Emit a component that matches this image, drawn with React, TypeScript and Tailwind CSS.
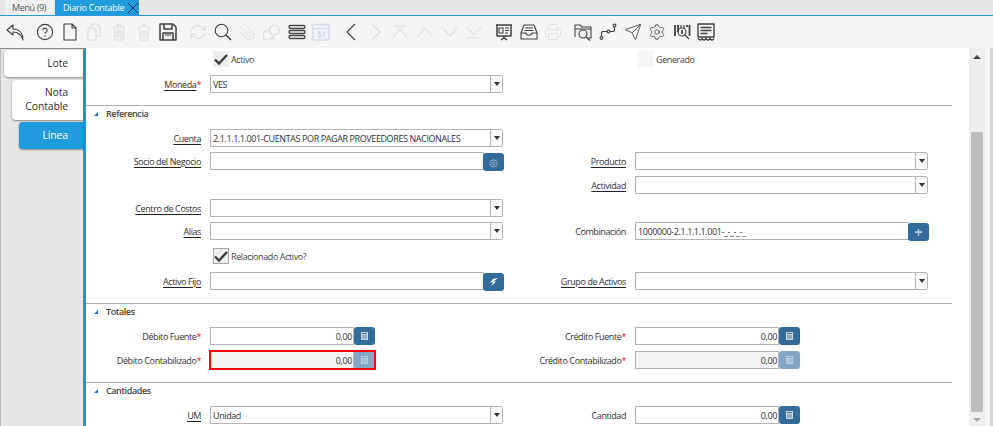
import React from 'react';
import { Paperclip, Send, Settings, Printer } from 'lucide-react';

const ACTIVE = '#404040';
const OFF = '#dcdcdc';

const Svg = ({ color = ACTIVE, children, w = 18 }: { color?: string; children: React.ReactNode; w?: number }) => (
  <svg width={w} height={18} viewBox={`0 0 ${w} 18`} fill="none" stroke={color} strokeWidth={1.1} strokeLinejoin="round">
    {children}
  </svg>
);

const TrashIcon = () => (
  <Svg color={OFF}>
    <path d="M3 4h12M7 4V2h4v2M4 4l1 13h8l1-13M7 6.5v8M9 6.5v8M11 6.5v8" />
  </Svg>
);

// Toolbar, grouped the way the window groups its actions
const toolGroups: React.ReactNode[][] = [
  [
    <Svg><path d="M7 2 1 7l6 5V9c4 0 8 2 10 8 0-7-4-11-10-11z" /></Svg>,
  ],
  [
    <Svg>
      <circle cx="9" cy="9" r="7.6" />
      <path d="M6.8 7.2a2.2 2.2 0 1 1 3.3 2c-.8.4-1.1.8-1.1 1.6M9 12.3v1.2" />
    </Svg>,
    <Svg><path d="M3 1h8l4 4v12H3zM11 1v4h4" /></Svg>,
    <Svg color={OFF}><path d="M6 4V1h6l3 3v9h-4M3 5h6l2 2v10H3z" /></Svg>,
    <TrashIcon />,
    <TrashIcon />,
    <Svg>
      <path strokeWidth={1.5} d="M1 1h13l3 3v13H1zM5 1v5h8V1M4 17v-7h10v7" />
      <path d="M6 12h6" />
    </Svg>,
  ],
  [
    <Svg color={OFF}><path d="M2 8a7 7 0 0 1 12-3l2 2m0-5v5h-5M16 10A7 7 0 0 1 4 13l-2-2m0 5v-5h5" /></Svg>,
    <Svg><circle cx="7.5" cy="7.5" r="6.3" /><path strokeWidth={1.5} d="m12 12 5 5" /></Svg>,
    <Paperclip size={18} strokeWidth={1.2} color={OFF} className="-scale-x-100" />,
    <Svg color={OFF}>
      <circle cx="11.5" cy="7" r="5" />
      <path d="M7 8.5a4.5 4.5 0 1 0 1 6.5l3 1-1-3" />
    </Svg>,
    <Svg color="#4a4a4a">
      <rect x="1" y="2.5" width="16" height="3" rx="1.5" strokeWidth={1.4} />
      <rect x="1" y="7.5" width="16" height="3" rx="1.5" strokeWidth={1.4} />
      <rect x="1" y="12.5" width="16" height="3" rx="1.5" strokeWidth={1.4} />
    </Svg>,
    <Svg color="#d5dbe6">
      <rect x="0.8" y="1.5" width="16.4" height="15.5" rx="1.5" strokeWidth={1.4} fill="#eef0f5" />
      <path d="M1 5.5h16M5 1v2M13 1v2" />
      <path stroke="#c8cfdd" d="M6 9h2.5l-1.3 2a1.4 1.4 0 1 1-1.3 2M11 9.5l1-.7V14" />
    </Svg>,
  ],
  [
    <Svg w={10}><path d="M9 1 1 9l8 8" /></Svg>,
    <Svg w={10} color={OFF}><path d="m1 1 8 8-8 8" /></Svg>,
    <Svg color={OFF}><path d="M2 3h14M2 14 9 6l7 8" /></Svg>,
    <Svg color={OFF}><path d="M2 13l7-8 7 8" /></Svg>,
    <Svg color={OFF}><path d="M2 5l7 8 7-8" /></Svg>,
    <Svg color={OFF}><path d="M2 4l7 8 7-8M2 15h14" /></Svg>,
  ],
  [
    <Svg>
      <path strokeWidth={1.5} d="M1 2h16M2 2v11h14V2M9 13v3M6 17l3-2 3 2" />
      <path d="M4 5h4v5H4zM10 5h4M10 7.5h4M10 10h3" />
    </Svg>,
    <Svg>
      <path d="M4 2h10l3 8v6H1v-6zM1 10h5c0 3 6 3 6 0h5M5 5h8M4.5 7.5h9" />
    </Svg>,
    <Printer size={18} strokeWidth={1.2} color={OFF} />,
  ],
  [
    <Svg>
      <path d="M1 14V2h5l2 2h9v11h-3M1 6h16" />
      <circle cx="9" cy="11" r="4" />
      <path d="m12 14 4 3.5" />
    </Svg>,
    <Svg>
      <circle cx="2.5" cy="15" r="1.4" />
      <circle cx="9.5" cy="8.5" r="1.4" />
      <circle cx="15.5" cy="2.5" r="1.4" />
      <path d="M2.5 13.5V9.5l1-1h4.5M11 8.5h3.5l1-1V4" />
    </Svg>,
    <Send size={18} strokeWidth={1.1} color={ACTIVE} />,
    <Settings size={18} strokeWidth={1.1} color={ACTIVE} />,
    <Svg>
      <path strokeWidth={1.8} d="M2 2v11M5 2v7M14 2v2M16.5 2v11" />
      <path strokeWidth={1.2} d="M8 2v3M11 2v3" />
      <circle cx="9" cy="9" r="4" />
      <path d="m12 12 4 4" />
      <path strokeWidth={1.6} d="M9 7v4" />
    </Svg>,
    <Svg>
      <path strokeWidth={1.4} d="M1 1h16v13H1z" />
      <path strokeWidth={1.6} d="M3.5 4.5h11M3.5 7.5h11M3.5 10.5h7" />
      <path strokeWidth={1.4} d="M1 15.5c2 2 3 2 4 0 1 2 3 2 4 0 1 2 3 2 4 0 1 2 3 2 4 0" />
    </Svg>,
  ],
];

const Caret = () => (
  <svg width="6" height="4" viewBox="0 0 6 4"><path d="M0 0h6L3 4z" fill="#333" /></svg>
);

const Label = ({ text, link, req }: { text: string; link?: boolean; req?: boolean }) => (
  <span className="mt-[1px] block text-[9px] leading-[12px] tracking-[-0.4px] text-[#333] whitespace-nowrap">
    <span className={link ? 'underline underline-offset-2 decoration-[#222]' : ''}>{text}</span>
    {req && <span className="text-[#e8101a]">*</span>}
  </span>
);

const SelectBox = ({ value }: { value?: string }) => (
  <div className="flex h-[18px] w-[293px] border border-[#b4b4b4] rounded-r-[2px] bg-white">
    <div className="flex-1 pl-[2px] text-[9px] leading-[18px] tracking-[-0.4px] text-[#333] whitespace-nowrap overflow-hidden">{value}</div>
    <div className="flex w-[12px] items-center justify-center border-l border-[#b4b4b4] bg-[#fafafa]">
      <Caret />
    </div>
  </div>
);

const SearchBox = ({ value, children }: { value?: string; children: React.ReactNode }) => (
  <div className="flex h-[18px] w-[294px]">
    <div className="flex-1 border border-[#b4b4b4] bg-white pl-[2px] text-[9px] leading-[18px] tracking-[-0.4px] text-[#333] whitespace-nowrap">{value}</div>
    <div className="flex h-[18px] w-[21px] -ml-[1px] mt-[1px] items-center justify-center rounded-[3px] bg-[#336b9b]">
      {children}
    </div>
  </div>
);

const AmountBox = ({ off }: { off?: boolean }) => (
  <div className="flex h-[18px] w-[165px]">
    <div className={`flex-1 border border-[#b4b4b4] pr-[1px] text-right text-[9px] leading-[18px] tracking-[-0.4px] text-[#333] ${off ? 'bg-[#f5f5f5]' : 'bg-white'}`}>
      0,00
    </div>
    <div className={`flex w-[21px] items-center justify-center rounded-[3px] ${off ? 'bg-[#84a6c4]' : 'bg-[#336b9b]'}`}>
      <svg width="7" height="8" viewBox="0 0 7 8">
        <rect width="7" height="8" fill={off ? '#b9cddd' : '#c8d7e4'} />
        <rect x="1" y="1" width="5" height="1" fill={off ? '#84a6c4' : '#336b9b'} />
        <rect x="1" y="3" width="5" height="4" fill={off ? '#a3bdd2' : '#8eacc6'} />
      </svg>
    </div>
  </div>
);

const Row = ({ className = '', label, field, rightLabel, rightField }: {
  className?: string;
  label?: React.ReactNode;
  field?: React.ReactNode;
  rightLabel?: React.ReactNode;
  rightField?: React.ReactNode;
}) => (
  <div className={`flex h-[18px] items-center ${className}`}>
    <div className="flex w-[115px] justify-end">{label}</div>
    <div className="ml-[9px] w-[293px]">{field}</div>
    <div className="flex w-[123px] justify-end">{rightLabel}</div>
    <div className="ml-[9px] w-[293px]">{rightField}</div>
  </div>
);

const Section = ({ title, className = '' }: { title: string; className?: string }) => (
  <div className={className}>
    <div className="h-px w-[866px] bg-[#b2b2b2]" />
    <div className="flex h-[14px] items-center pl-[8px]">
      <svg width="4" height="4" viewBox="0 0 4 4" className="mt-[2px]"><path d="M4 0v4H0z" fill="#2b6cb5" /></svg>
      <span className="ml-[8px] text-[9px] font-semibold leading-none tracking-[-0.4px] text-[#444]">{title}</span>
    </div>
  </div>
);

const CheckBox = ({ label, checked, bordered }: { label: string; checked?: boolean; bordered?: boolean }) => (
  <div className="flex h-[16px] items-center">
    <div className={`ml-[3px] flex h-[16px] w-[16px] items-center justify-center ${bordered ? 'border border-[#a8a8a8]' : ''} ${checked ? 'bg-[#eeeeee]' : 'bg-[#f6f6f6]'}`}>
      {checked && (
        <svg width="14" height="11" viewBox="0 0 14 11"><path d="M1 5.5 5 9.5 13 1" fill="none" stroke="#3c3c3c" strokeWidth="2.4" /></svg>
      )}
    </div>
    <span className="ml-[2px] text-[9px] leading-none tracking-[-0.4px] text-[#444]">{label}</span>
  </div>
);

export default function App() {
  const arrowPlain = <span className="text-[10px] leading-none text-[#b5c6d6]">◎</span>;

  return (
    <div className="flex h-[426px] w-[993px] flex-col overflow-hidden bg-white font-['Open_Sans',sans-serif]">
      {/* Window tabs */}
      <div className="flex h-[16px] items-stretch border-b border-[#2f97d8] bg-[#e6e6e6] pl-[5px]">
        <div className="flex w-[48px] items-center justify-center bg-[#f1f1f1] text-[9px] tracking-[-0.4px] text-[#555]">Menú (9)</div>
        <div className="ml-[2px] flex w-[84px] items-center bg-[#1f9bde] pl-[8px] text-[9px] tracking-[-0.25px] text-white">
          <span className="whitespace-nowrap">Diario Contable</span>
          <svg width="10" height="10" viewBox="0 0 10 10" className="ml-[4px] shrink-0"><path d="m0 0 10 10M10 0 0 10" stroke="#1d3a52" strokeWidth="1" /></svg>
        </div>
      </div>

      {/* Toolbar */}
      <div className="flex h-[32px] items-center bg-[#f5f5f5] pl-[3px]">
        {toolGroups.map((group, g) => (
          <div key={g} className={`flex ${g === 0 ? '' : 'ml-[5.4px]'}`}>
            {group.map((icon, i) => (
              <div key={i} className="flex w-[24.6px] justify-center">{icon}</div>
            ))}
          </div>
        ))}
      </div>

      <div className="flex min-h-0 flex-1">
        {/* Tabs of the window */}
        <div className="flex w-[86px] flex-col items-end border-r-[3px] border-[#159ce2] border-l border-l-[#bdbdbd] border-t border-t-[#8a8a8a] bg-[#e6e6e6]">
          <div className="mt-[1px] h-[27px] w-[79px] rounded-l-[4px] bg-white pr-[15px] text-right text-[10.5px] leading-[27px] tracking-[-0.15px] text-[#333] shadow-[0_1px_2px_rgba(0,0,0,0.4)]">Lote</div>
          <div className="mt-[3px] h-[40px] w-[71px] rounded-l-[4px] bg-white pr-[15px] pt-[5px] text-right text-[10.5px] leading-[14px] tracking-[-0.15px] text-[#333] shadow-[0_1px_2px_rgba(0,0,0,0.4)]">Nota Contable</div>
          <div className="mt-[2px] h-[27px] w-[64px] rounded-l-[4px] bg-[#1f9bde] pr-[15px] text-right text-[10.5px] leading-[26px] tracking-[-0.15px] text-white shadow-[0_1px_2px_rgba(0,0,0,0.4)]">Línea</div>
        </div>

        {/* Form */}
        <div className="w-[883px]">
          <div className="mt-[3px] flex h-[16px] items-center">
            <div className="ml-[124px] w-[425px]"><CheckBox label="Activo" checked /></div>
            <CheckBox label="Generado" />
          </div>
          <Row className="mt-[8px]" label={<Label text="Moneda" link req />} field={<SelectBox value="VES" />} />

          <Section title="Referencia" className="mt-[12px]" />
          <Row className="mt-[9px]" label={<Label text="Cuenta" link />} field={<SelectBox value="2.1.1.1.1.001-CUENTAS POR PAGAR PROVEEDORES NACIONALES" />} />
          <Row
            className="mt-[5px]"
            label={<Label text="Socio del Negocio" link />}
            field={<SearchBox>{arrowPlain}</SearchBox>}
            rightLabel={<Label text="Producto" link />}
            rightField={<SelectBox />}
          />
          <Row className="mt-[6px]" rightLabel={<Label text="Actividad" link />} rightField={<SelectBox />} />
          <Row className="mt-[5px]" label={<Label text="Centro de Costos" link />} field={<SelectBox />} />
          <Row
            className="mt-[5px]"
            label={<Label text="Alias" link />}
            field={<SelectBox />}
            rightLabel={<Label text="Combinación" />}
            rightField={
              <SearchBox value="1000000-2.1.1.1.1.001-_-_-_-_">
                <svg width="7" height="7" viewBox="0 0 9 9"><path d="M0 3h9v2H0zM3.5 0h2v9h-2z" fill="#b8cbdc" /></svg>
              </SearchBox>
            }
          />
          <div className="mt-[8px] flex h-[16px] items-center">
            <div className="ml-[124px]"><CheckBox label="Relacionado Activo?" checked bordered /></div>
          </div>
          <Row
            className="mt-[8px]"
            label={<Label text="Activo Fijo" link />}
            field={
              <SearchBox>
                <svg width="8" height="8" viewBox="0 0 8 8"><path d="M8 0 3 1 0 4.5 3 4 1.5 8 6 3.5H3.5z" fill="#fff" /></svg>
              </SearchBox>
            }
            rightLabel={<Label text="Grupo de Activos" link />}
            rightField={<SelectBox />}
          />

          <Section title="Totales" className="mt-[13px]" />
          <Row
            className="mt-[9px]"
            label={<Label text="Débito Fuente" req />}
            field={<AmountBox />}
            rightLabel={<Label text="Crédito Fuente" req />}
            rightField={<AmountBox />}
          />
          <Row
            className="mt-[6px]"
            label={<Label text="Débito Contabilizado" req />}
            field={<div className="w-[165px] outline-2 -outline-offset-1 outline-[#f00]"><AmountBox off /></div>}
            rightLabel={<Label text="Crédito Contabilizado" req />}
            rightField={<AmountBox off />}
          />

          <Section title="Cantidades" className="mt-[13px]" />
          <Row
            className="mt-[9px]"
            label={<Label text="UM" link />}
            field={<SelectBox value="Unidad" />}
            rightLabel={<Label text="Cantidad" />}
            rightField={<AmountBox />}
          />
        </div>

        {/* Scrollbar */}
        <div className="flex w-[16px] flex-col items-center bg-[#efefef]">
          <svg width="8" height="4" viewBox="0 0 8 4" className="mt-[7px]"><path d="M4 0 8 4H0z" fill="#444" /></svg>
          <div className="mt-[73px] h-[280px] w-[12px] shrink-0 bg-[#bdbdbd]" />
          <svg width="8" height="4" viewBox="0 0 8 4" className="mt-[6px]"><path d="M0 0h8L4 4z" fill="#aaa" /></svg>
        </div>
        <div className="w-[5px] bg-[#f6f6f6]" />
        <div className="w-[3px] bg-[#d4d4d4]" />
      </div>
    </div>
  );
}
